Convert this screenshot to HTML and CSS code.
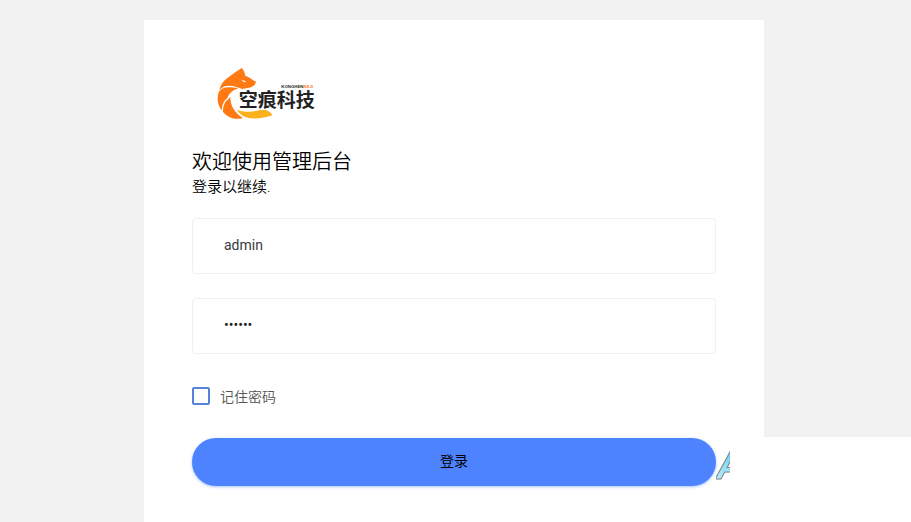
FILE: index.html
```html
<!DOCTYPE html>
<html lang="zh-CN">
<head>
    <meta charset="UTF-8">
    <meta name="viewport" content="width=device-width, initial-scale=1.0">
    <title>管理后台</title>
    <link rel="stylesheet" href="styles.css">
</head>
<body>
    <main class="login-card">
        <svg class="brand-logo" viewBox="-39 24 384 156" role="img" aria-label="空痕科技">
            <!-- 狐狸 -->
            <path fill="#ff7a12" d="M110 24 C116 29 119 37 121 47 C128 49 136 54 142 59 L153 65 C151 74 143 82 131 83 L112 87 C101 83 89 77 72 77 C59 77 49 83 43 91 C46 75 55 63 66 55 C75 48 84 42 93 35 Z"/>
            <path fill="#fff" d="M109 60 Q118 60 124 66 Q114 68 109 60 Z"/>
            <path fill="#ff7a12" d="M41 97 C49 85 59 81 78 82 L101 85 C84 90 72 100 67 115 C56 122 52 134 50 151 C38 137 35 116 41 97 Z"/>
            <path fill="#ff7a12" d="M54 156 C54 140 57 127 68 119 L76 111 C76 137 88 158 114 174 C90 181 68 173 54 156 Z"/>
            <path fill="#fbb01c" d="M95 149 C120 158 141 156 162 151 C181 146 193 151 203 166 C183 172 160 177 137 175 C117 172 105 163 95 149 Z"/>
            <text class="logo-sub" x="229" y="83">KONGHEN<tspan class="logo-accent">KEJI</tspan></text>
            <text class="logo-name" x="101" y="141">空痕科技</text>
        </svg>

        <h1>欢迎使用管理后台</h1>
        <p class="subtitle">登录以继续.</p>

        <form class="login-form" onsubmit="return false">
            <input class="field" type="text" name="username" value="admin" aria-label="用户名">
            <input class="field" type="password" name="password" value="123456" aria-label="密码">
            <label class="remember">
                <input type="checkbox" name="remember">
                <span>记住密码</span>
            </label>
            <button class="btn-login" type="submit">登录</button>
        </form>
    </main>

    <!-- 右下角浮层 -->
    <aside class="float-panel">
        <span class="float-mark">A</span>
    </aside>
</body>
</html>
```

FILE: styles.css
```css
* {
    box-sizing: border-box;
}

body {
    margin: 0;
    padding: 20px 3px 0 0;
    min-height: 100vh;
    display: flex;
    justify-content: center;
    background-color: #f2f2f2;
    font-family: Roboto, "Noto Sans CJK SC", sans-serif;
    color: #000;
}

/* 登录卡片 */
.login-card {
    width: 100%;
    max-width: 620px;
    padding: 48px 48px 36px;
    background-color: #fff;
}

.brand-logo {
    display: block;
    width: 128px;
    height: 52px;
}

.logo-name {
    font-family: "Noto Sans CJK SC", sans-serif;
    font-size: 57px;
    font-weight: 700;
    fill: #222;
    stroke: #fff;
    stroke-width: 5px;
    paint-order: stroke;
}

.logo-sub {
    font-family: "Liberation Sans Narrow", "Liberation Sans", sans-serif;
    font-size: 13px;
    font-weight: 700;
    fill: #222;
}

.logo-accent {
    fill: #ff7a12;
}

h1 {
    margin: 28px 0 0;
    font-size: 20px;
    font-weight: 350;
    line-height: 28px;
}

.subtitle {
    margin: 0;
    font-size: 15px;
    font-weight: 350;
    line-height: 22px;
}

/* 表单 */
.login-form {
    display: flex;
    flex-direction: column;
    gap: 24px;
    margin-top: 20px;
}

.field {
    width: 100%;
    height: 56px;
    padding: 0 31px 2px;
    border: 1px solid #f0f0f0;
    border-radius: 4px;
    background-color: #fff;
    font-family: inherit;
    font-size: 14px;
    color: #343a40;
    outline: none;
}

.field[type="password"] {
    color: #222;
}

.remember {
    display: flex;
    align-items: center;
    align-self: flex-start;
    gap: 10px;
    height: 36px;
    font-size: 14px;
    font-weight: 350;
    color: #555;
    cursor: pointer;
}

.remember input {
    appearance: none;
    width: 18px;
    height: 18px;
    margin: 0;
    border: 2px solid #5383dc;
    border-radius: 2px;
    background-color: #fff;
}

.remember input:checked {
    background-color: #4d83ff;
}

.btn-login {
    height: 48px;
    padding: 0 24px 4px;
    border: none;
    border-radius: 24px;
    background-color: #4d83ff;
    box-shadow: 0 1px 3px rgba(77, 131, 255, 0.5);
    font-family: inherit;
    font-size: 14px;
    color: #000;
    cursor: pointer;
}

/* 浮层 */
.float-panel {
    position: fixed;
    right: 0;
    bottom: 0;
    width: 181px;
    height: 85px;
    background-color: #fff;
}

.float-mark {
    position: absolute;
    right: 100%;
    top: 8px;
    width: 14px;
    height: 40px;
    overflow: hidden;
    font-family: "Liberation Sans", sans-serif;
    font-size: 40px;
    font-style: italic;
    font-weight: 700;
    line-height: 40px;
    color: transparent;
    background: linear-gradient(#55c8f5, #c4f2fa);
    background-clip: text;
    -webkit-text-stroke: 1px #8a8583;
}
```
